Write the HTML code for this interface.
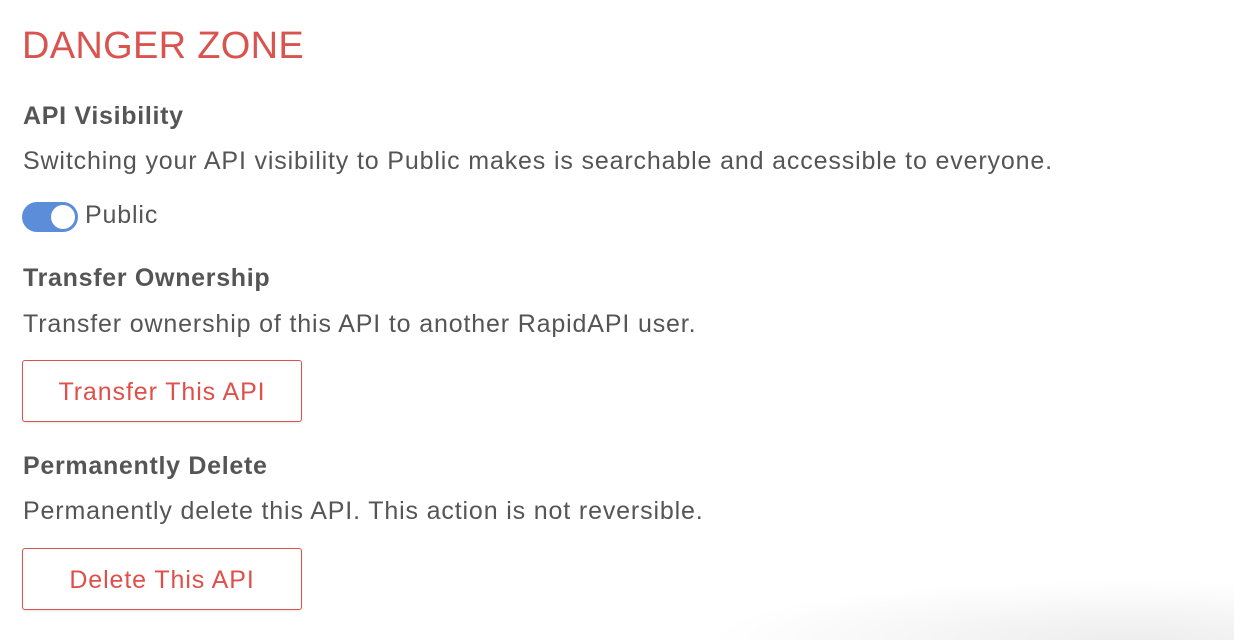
<!DOCTYPE html>
<html><head><style>
html,body{margin:0;width:1234px;height:640px;overflow:hidden}
body{background:#fff;font-family:"Liberation Sans",sans-serif;color:#555;position:relative}
.a{position:absolute;left:23px;white-space:nowrap}
h1{position:absolute;left:22px;top:25px;margin:0;font-weight:normal;font-size:38px;color:#d9534f;letter-spacing:0.3px}
.h{font-weight:bold;font-size:25px;letter-spacing:0.7px;color:#555}
.t{font-size:25px;letter-spacing:0.85px;color:#555}
.btn{position:absolute;left:22px;width:278px;height:60px;border:1px solid #e0504a;border-radius:3px;color:#e0504a;font-size:25px;letter-spacing:0.9px;text-align:center;line-height:62px;box-sizing:content-box;box-shadow:0 1px 2px rgba(0,0,0,0.1)}
.tog{position:absolute;left:22px;top:202px;width:56px;height:30px;border-radius:15px;background:#5b8dd9}
.tog:after{content:"";position:absolute;right:3px;top:3px;width:24px;height:24px;border-radius:50%;background:#fff}
.sh{position:absolute;left:700px;top:560px;width:534px;height:80px;background:radial-gradient(ellipse 420px 60px at 80% 100%,rgba(0,0,0,0.07),rgba(0,0,0,0))}
</style></head><body>
<h1>DANGER ZONE</h1>
<div class="a h" style="top:102px">API Visibility</div>
<div class="a t" style="top:147px">Switching your API visibility to Public makes is searchable and accessible to everyone.</div>
<div class="tog"></div>
<div class="a t" style="left:85px;top:201px">Public</div>
<div class="a h" style="top:264px">Transfer Ownership</div>
<div class="a t" style="top:310px">Transfer ownership of this API to another RapidAPI user.</div>
<div class="btn" style="top:360px">Transfer This API</div>
<div class="a h" style="top:452px">Permanently Delete</div>
<div class="a t" style="top:497px">Permanently delete this API. This action is not reversible.</div>
<div class="btn" style="top:548px">Delete This API</div>
<div class="sh"></div>
</body></html>
